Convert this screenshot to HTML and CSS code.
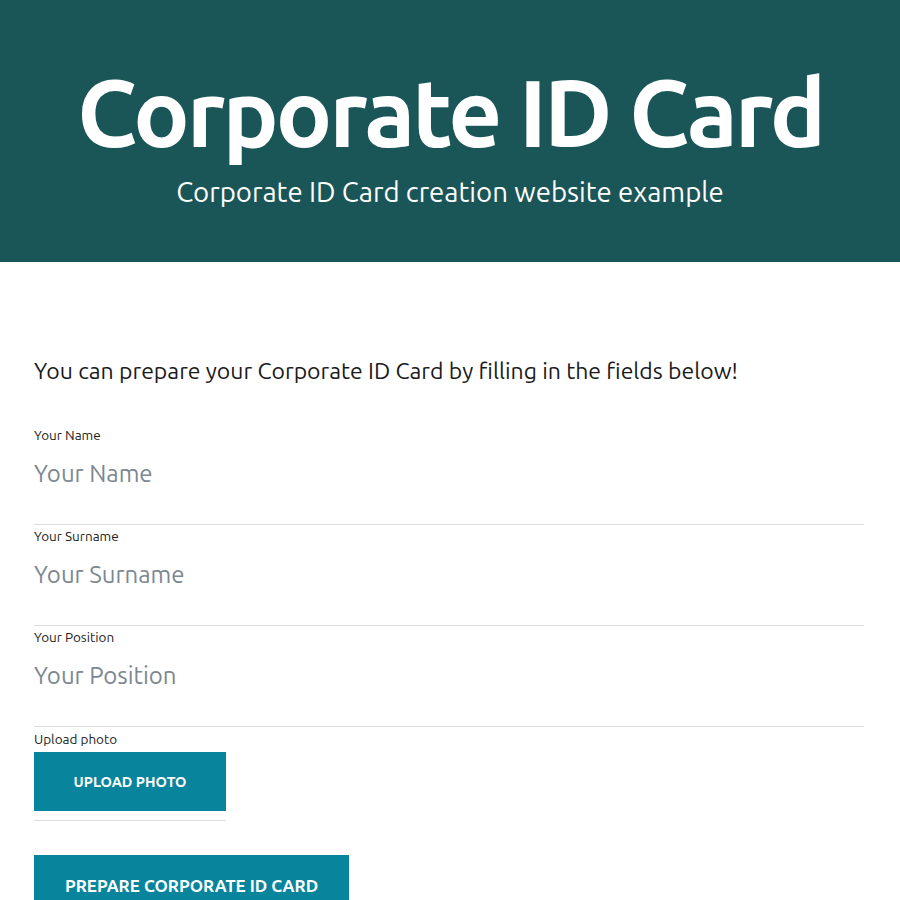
FILE: index.html
```html
<!DOCTYPE html>
<html lang="en">
<head>
<meta charset="utf-8">
<title>Corporate ID Card</title>
<link rel="stylesheet" href="styles.css">
</head>
<body>
<header class="hero">
  <h1 class="hero-title">Corporate ID Card</h1>
  <p class="hero-sub">Corporate ID Card creation website example</p>
</header>
<main class="content">
  <p class="intro">You can prepare your Corporate ID Card by filling in the fields below!</p>
  <form class="form">
    <div class="field">
      <label class="field-label" for="name">Your Name</label>
      <input class="field-input" id="name" type="text" placeholder="Your Name">
    </div>
    <div class="field">
      <label class="field-label" for="surname">Your Surname</label>
      <input class="field-input" id="surname" type="text" placeholder="Your Surname">
    </div>
    <div class="field">
      <label class="field-label" for="position">Your Position</label>
      <input class="field-input" id="position" type="text" placeholder="Your Position">
    </div>
    <div class="upload">
      <span class="field-label">Upload photo</span>
      <div class="upload-box">
        <button type="button" class="btn">UPLOAD PHOTO</button>
      </div>
    </div>
    <button type="button" class="btn btn-submit">PREPARE CORPORATE ID CARD</button>
  </form>
</main>
</body>
</html>
```
FILE: styles.css
```css
* { box-sizing: border-box; }
html, body { margin: 0; padding: 0; background: #fff; }
body {
  font-family: "Ubuntu", "Noto Sans", "Open Sans", sans-serif;
  color: #1a1a1a;
}
.hero {
  background: #1a5657;
  color: #fff;
  height: 262px;
  display: flex;
  flex-direction: column;
  align-items: center;
  padding-top: 52px;
}
.hero-title {
  margin: 0;
  font-size: 94px;
  font-weight: 700;
  line-height: 120px;
  letter-spacing: -3px;
}
.hero-sub {
  margin: 0;
  font-size: 27.6px;
  line-height: 36px;
  margin-top: 2px;
}
.content {
  padding: 94px 36px 0 34px;
}
.intro {
  margin: 0 0 40px;
  font-size: 23px;
  line-height: 30px;
}
.form { display: flex; flex-direction: column; align-items: flex-start; }
.field {
  width: 100%;
  display: flex;
  flex-direction: column;
  border-bottom: 1px solid #dddddd;
  margin-bottom: 2px;
}
.field-label {
  font-size: 13.5px;
  line-height: 18px;
  color: #222;
}
.field-input {
  border: 0;
  outline: 0;
  padding: 0 0 2px;
  height: 60px;
  margin-bottom: 20px;
  font-family: inherit;
  font-size: 24px;
  color: #333;
  background: transparent;
  align-self: stretch;
}
.field-input::placeholder { color: #7c8791; }
.upload { display: flex; flex-direction: column; margin-top: 1px; }
.upload-box {
  border-bottom: 1px solid #dddddd;
  padding-bottom: 9px;
  margin-top: 4px;
  display: flex;
}
.btn {
  background: #08849c;
  color: #fff;
  border: 0;
  font-family: inherit;
  font-weight: 700;
  font-size: 14.5px;
  height: 59px;
  padding: 0;
  cursor: pointer;
}
.upload-box .btn { width: 192px; }
.btn-submit {
  margin-top: 34px;
  width: 315px;
  font-size: 17px;
  height: 60px;
}
```
